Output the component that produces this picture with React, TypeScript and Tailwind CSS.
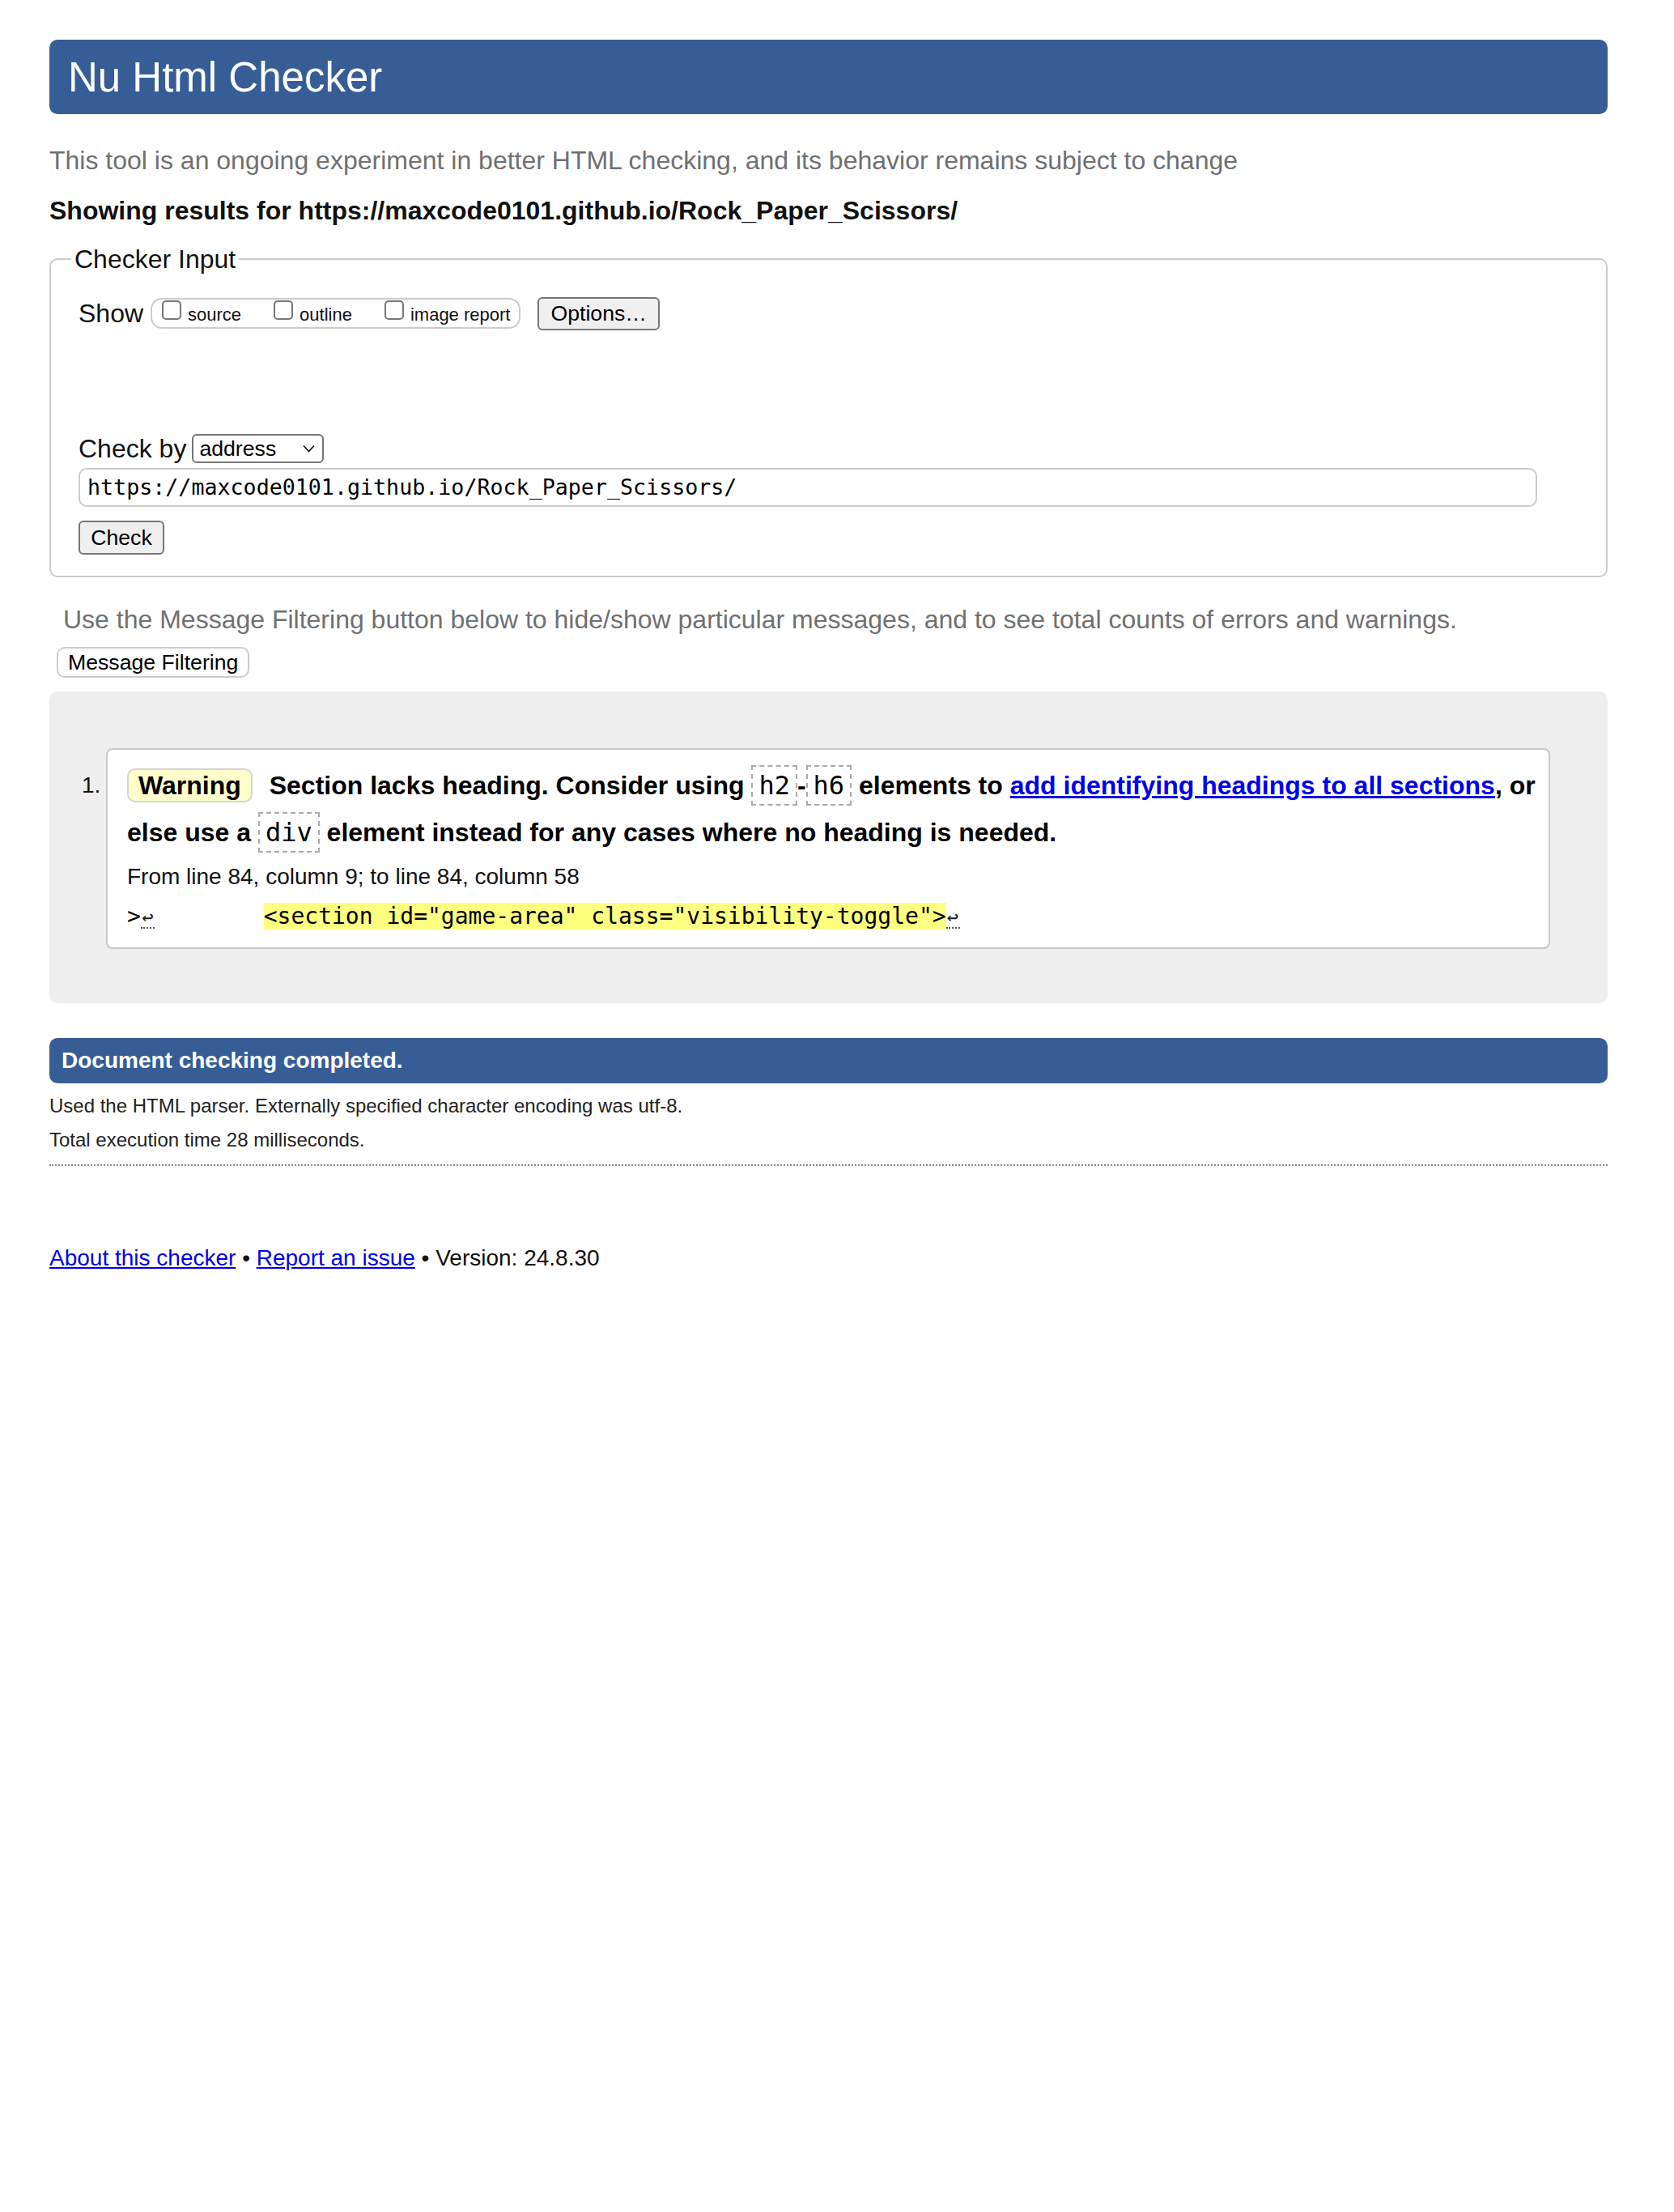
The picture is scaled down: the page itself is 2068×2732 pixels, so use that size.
import React from 'react';

const MONO = "font-['DejaVu_Sans_Mono','Liberation_Mono',monospace]";

function Code({ children }: { children: React.ReactNode }) {
  return (
    <code
      className={`${MONO} border-2 border-dashed border-[#aaaaaa] px-[7px] py-[4px] font-normal`}
    >
      {children}
    </code>
  );
}

function LineBreakMark() {
  return (
    <span className="inline-block w-[17px] border-b-2 border-dotted border-[#555] text-center text-[24px] leading-[24px] text-[#222]">
      ↩
    </span>
  );
}

function ShowOption({ label, first }: { label: string; first?: boolean }) {
  return (
    <label className={`flex items-start ${first ? '' : 'ml-[40px]'}`}>
      <input
        type="checkbox"
        className="mt-[1px] h-[24px] w-[24px] appearance-none rounded-[5px] border-2 border-[#767676] bg-white"
      />
      <span className="ml-[8px] mt-[6px] text-[22px] leading-[26px] text-[#111]">{label}</span>
    </label>
  );
}

export default function App() {
  return (
    <div className="min-h-[2732px] bg-white pl-[61px] pr-[82px] pt-[49px] font-['Liberation_Sans',Arial,sans-serif] text-[#111]">
      {/* Başlık */}
      <h1 className="flex h-[92px] items-center rounded-[10px] bg-[#365d95] pl-[23px] text-[51px] font-normal leading-[51px] text-white">
        Nu Html Checker
      </h1>

      <p className="mt-[37px] text-[32px] leading-[40px] text-[#707070]">
        This tool is an ongoing experiment in better HTML checking, and its behavior remains subject to change
      </p>
      <p className="mt-[22px] text-[32px] font-bold leading-[40px] text-[#111]">
        Showing results for https://maxcode0101.github.io/Rock_Paper_Scissors/
      </p>

      {/* Checker input */}
      <fieldset className="mt-[20px] rounded-[10px] border-2 border-[#cccccc] px-[34px] pb-[26px] pt-[26px]">
        <legend className="-ml-[9px] px-[4px] text-[32px] leading-[40px] text-[#111]">Checker Input</legend>

        <div className="flex h-[42px] items-center">
          <span className="text-[32px] leading-[40px]">Show</span>
          <div className="ml-[9px] flex h-[38px] items-start rounded-[14px] border-2 border-[#cccccc] pl-[12px] pr-[11px]">
            <ShowOption label="source" first />
            <ShowOption label="outline" />
            <ShowOption label="image report" />
          </div>
          <button className="ml-[21px] h-[41px] rounded-[6px] border-2 border-[#767676] bg-[#efefef] px-[14px] text-[26.67px] leading-[30px] text-black">
            Options…
          </button>
        </div>

        <div className="mt-[128px] flex h-[36px] items-center">
          <span className="text-[32px] leading-[40px]">Check by</span>
          <div className="ml-[7px] flex h-[36px] w-[163px] items-center justify-between rounded-[6px] border-2 border-[#767676] bg-white pl-[7px] pr-[9px]">
            <span className="text-[26.67px] leading-[30px] text-black">address</span>
            <svg width="15" height="10" viewBox="0 0 15 10" fill="none">
              <path d="M1 1.5 L7.5 8.5 L14 1.5" stroke="#111" strokeWidth="1.6" />
            </svg>
          </div>
        </div>

        <div
          className={`mt-[6px] flex h-[48px] w-[1802px] items-center rounded-[10px] border-2 border-[#cccccc] pl-[9px] text-[26.67px] leading-[34px] text-black ${MONO}`}
        >
          https://maxcode0101.github.io/Rock_Paper_Scissors/
        </div>

        <button className="mt-[17px] h-[42px] w-[106px] rounded-[6px] border-2 border-[#767676] bg-[#efefef] text-[26.67px] leading-[30px] text-black">
          Check
        </button>
      </fieldset>

      <p className="mt-[32px] pl-[17px] text-[32px] leading-[40px] text-[#707070]">
        Use the Message Filtering button below to hide/show particular messages, and to see total counts of errors and warnings.
      </p>
      <button className="ml-[9px] mt-[14px] h-[38px] rounded-[10px] border-2 border-[#cccccc] bg-white px-[12px] text-[26.67px] leading-[30px] text-black">
        Message Filtering
      </button>

      {/* Mesaj listesi */}
      <div className="mt-[17px] rounded-[10px] bg-[#eeeeee] pb-[67px] pl-[40px] pr-[71px] pt-[70px]">
        <div className="flex items-start">
          <span className="mt-[17px] w-[30px] text-[28px] leading-[58px] text-[#111]">1.</span>
          <div className="flex-1 rounded-[8px] border-2 border-[#c8c8c8] bg-white pb-[20px] pl-[24px] pr-[14px] pt-[15px]">
            <p className="text-[32px] font-bold leading-[58px] text-black">
              <span className="mr-[12px] inline-block rounded-[10px] border-2 border-[#d4d4d4] bg-[#ffffcc] px-[12px] py-[1px] leading-[36px]">
                Warning
              </span>{' '}
              Section lacks heading. Consider using <Code>h2</Code>-<Code>h6</Code> elements to{' '}
              <a href="#" className="text-[#0000ee] underline">
                add identifying headings to all sections
              </a>
              , or
              <br />
              else use a <Code>div</Code> element instead for any cases where no heading is needed.
            </p>
            <p className="mt-[8px] text-[28px] leading-[36px] text-[#111]">
              From line 84, column 9; to line 84, column 58
            </p>
            <p className={`mt-[13px] whitespace-pre text-[28px] leading-[36px] text-black ${MONO}`}>
              {'>'}
              <LineBreakMark />
              {'        '}
              <span className="bg-[#ffff80]">{'<section id="game-area" class="visibility-toggle">'}</span>
              <LineBreakMark />
            </p>
          </div>
        </div>
      </div>

      {/* Sonuç */}
      <div className="mt-[43px] flex h-[56px] items-center rounded-[10px] bg-[#365d95] pl-[15px] text-[28px] font-bold leading-[34px] text-white">
        Document checking completed.
      </div>
      <p className="mt-[13px] text-[24px] leading-[30px] text-[#222]">
        Used the HTML parser. Externally specified character encoding was utf-8.
      </p>
      <p className="mt-[12px] text-[24px] leading-[30px] text-[#222]">Total execution time 28 milliseconds.</p>
      <div className="mt-[15px] border-b-2 border-dotted border-[#8a8a8a]" />

      <p className="mt-[96px] text-[28px] leading-[36px] text-[#111]">
        <a href="#" className="text-[#0000ee] underline">
          About this checker
        </a>{' '}
        •{' '}
        <a href="#" className="text-[#0000ee] underline">
          Report an issue
        </a>{' '}
        • Version: 24.8.30
      </p>
    </div>
  );
}
